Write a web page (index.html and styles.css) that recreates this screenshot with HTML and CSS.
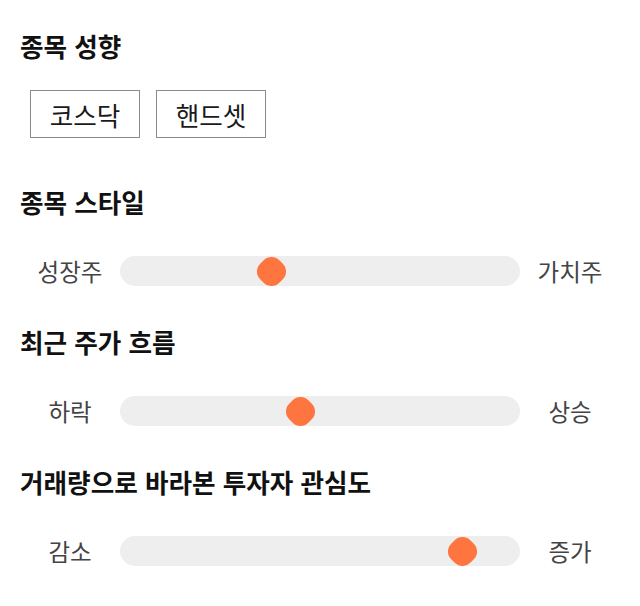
FILE: index.html
```html
<!DOCTYPE html>
<html lang="ko">
<head>
<meta charset="utf-8">
<link rel="stylesheet" href="styles.css">
</head>
<body>
<main class="page">
  <section class="section section--buttons">
    <h2 class="title">종목 성향</h2>
    <div class="chips">
      <button class="chip">코스닥</button>
      <button class="chip">핸드셋</button>
    </div>
  </section>

  <section class="section">
    <h2 class="title">종목 스타일</h2>
    <div class="slider-row">
      <span class="label">성장주</span>
      <div class="track"><span class="thumb" style="left: calc(15px + 0.37 * (100% - 30px));"></span></div>
      <span class="label">가치주</span>
    </div>
  </section>

  <section class="section">
    <h2 class="title">최근 주가 흐름</h2>
    <div class="slider-row">
      <span class="label">하락</span>
      <div class="track"><span class="thumb" style="left: calc(15px + 0.446 * (100% - 30px));"></span></div>
      <span class="label">상승</span>
    </div>
  </section>

  <section class="section">
    <h2 class="title">거래량으로 바라본 투자자 관심도</h2>
    <div class="slider-row">
      <span class="label">감소</span>
      <div class="track"><span class="thumb" style="left: calc(15px + 0.886 * (100% - 30px));"></span></div>
      <span class="label">증가</span>
    </div>
  </section>
</main>
</body>
</html>
```

FILE: styles.css
```css
* { box-sizing: border-box; }
html, body { margin: 0; padding: 0; background: #ffffff; }
body {
  font-family: "Noto Sans CJK KR", "Noto Sans", sans-serif;
  color: #111;
}
.page {
  padding: 30px 20px 0 20px;
  display: flex;
  flex-direction: column;
  gap: 40px;
}
.section--buttons { margin-bottom: 8px; }
.title {
  margin: 0;
  font-size: 25.6px;
  line-height: 32px;
  font-weight: 700;
  color: #111;
}
.chips {
  margin-top: 28px;
  padding-left: 10px;
  display: flex;
  gap: 16px;
}
.chip {
  width: 110px;
  height: 48px;
  border: 1px solid #8a8a8a;
  background: #fff;
  font-family: inherit;
  font-size: 25.6px;
  color: #1a1a1a;
  padding: 0;
  border-radius: 0;
}
.slider-row {
  margin-top: 38px;
  height: 30px;
  display: flex;
  align-items: center;
}
.label {
  width: 100px;
  text-align: center;
  font-size: 23.5px;
  color: #444;
}
.track {
  flex: 1;
  height: 30px;
  background: #eeeeee;
  border-radius: 15px;
  position: relative;
}
.thumb {
  position: absolute;
  top: 50%;
  width: 27px;
  height: 27px;
  margin-left: -13.5px;
  margin-top: -13.5px;
  background: #ff7540;
  border-radius: 11px;
  transform: rotate(45deg);
}
```
